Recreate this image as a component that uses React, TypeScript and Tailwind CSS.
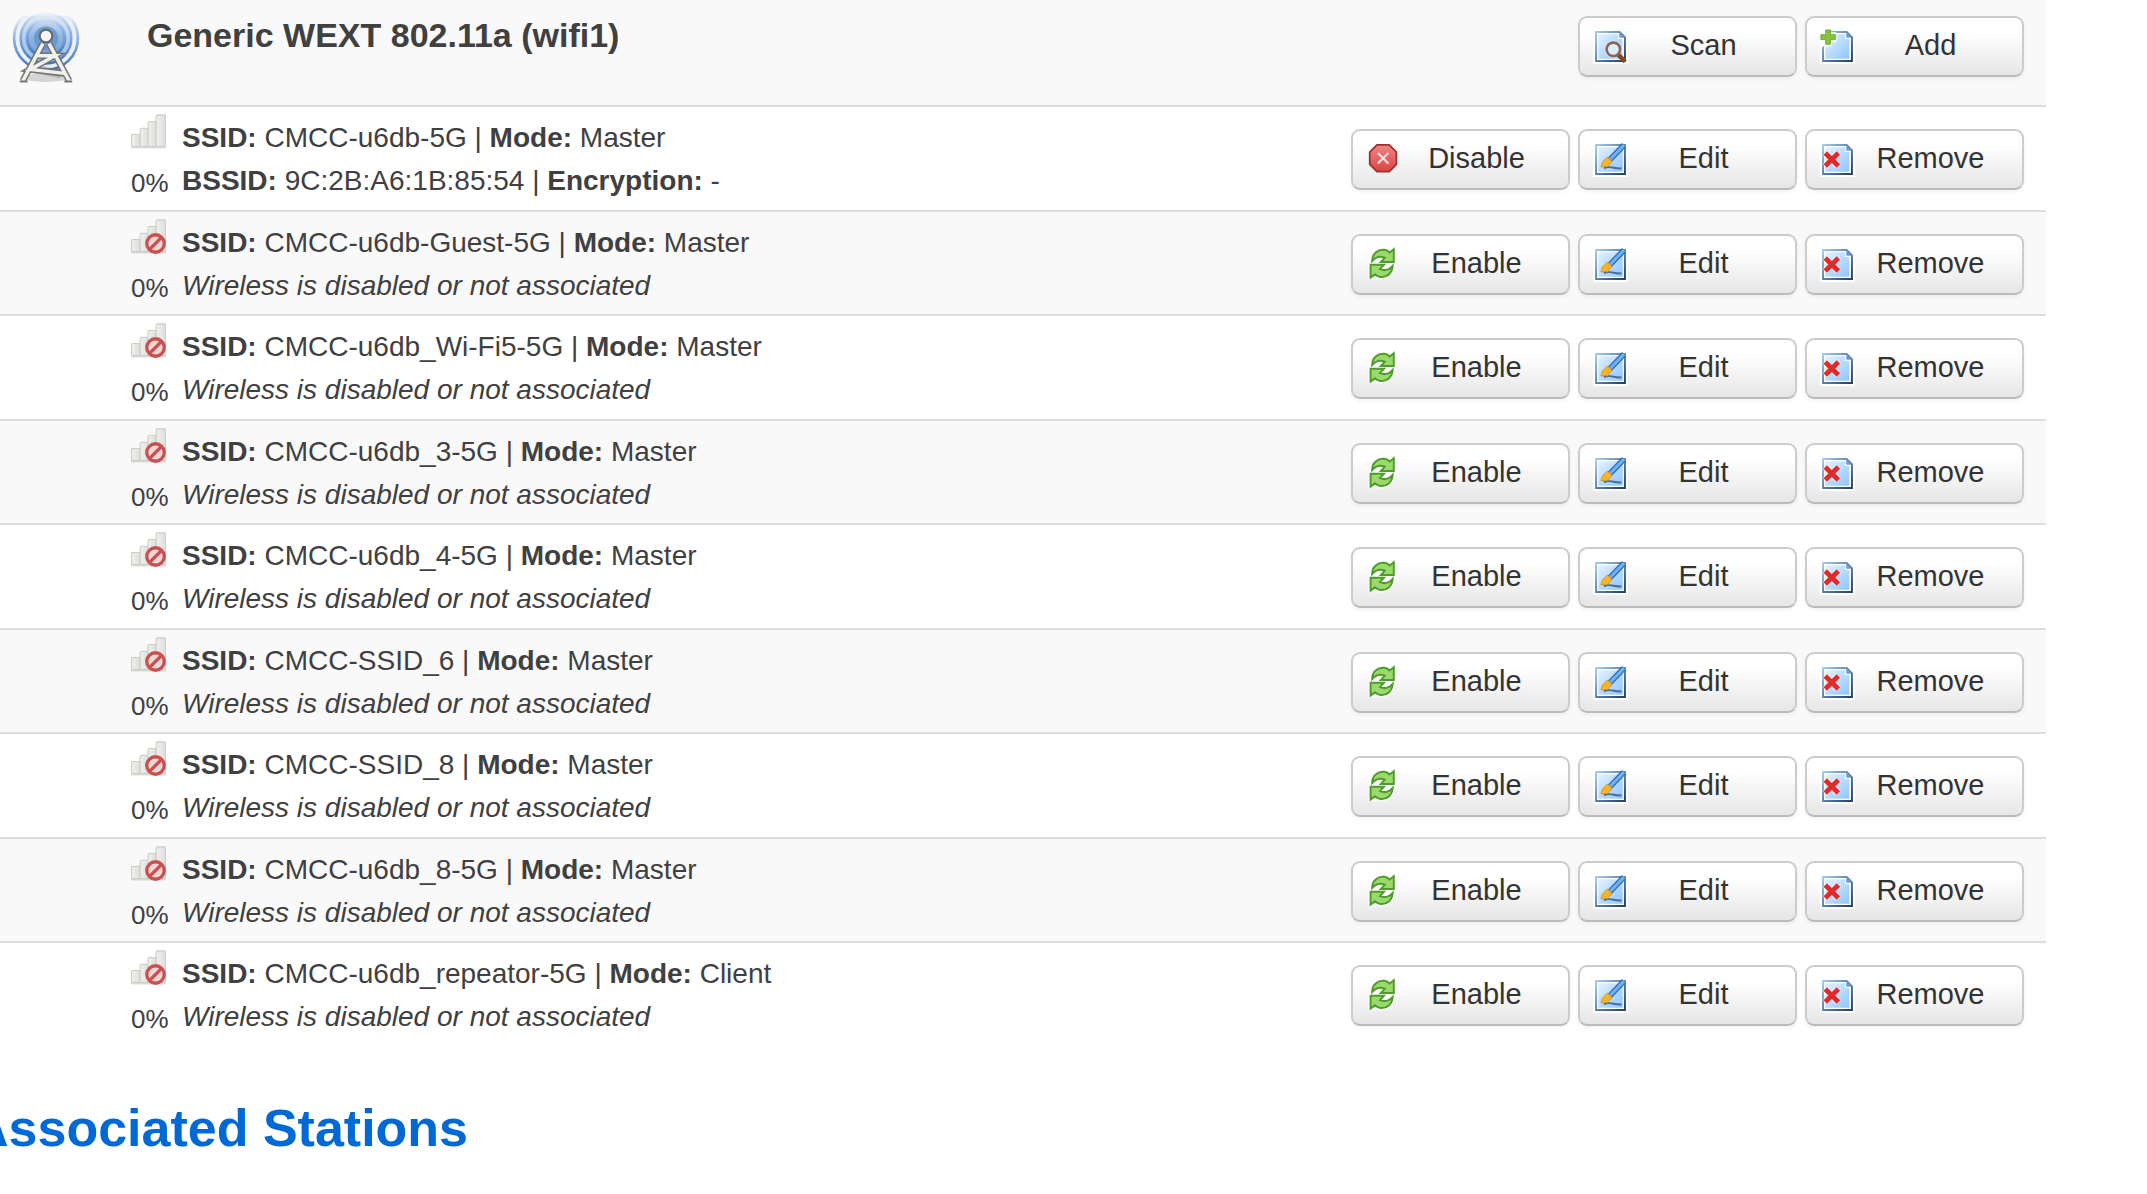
import type { ReactNode } from "react";

type Network = {
  ssid: string;
  mode: string;
  bssid?: string;
};

const networks: Network[] = [
  { ssid: "CMCC-u6db-5G", mode: "Master", bssid: "9C:2B:A6:1B:85:54" },
  { ssid: "CMCC-u6db-Guest-5G", mode: "Master" },
  { ssid: "CMCC-u6db_Wi-Fi5-5G", mode: "Master" },
  { ssid: "CMCC-u6db_3-5G", mode: "Master" },
  { ssid: "CMCC-u6db_4-5G", mode: "Master" },
  { ssid: "CMCC-SSID_6", mode: "Master" },
  { ssid: "CMCC-SSID_8", mode: "Master" },
  { ssid: "CMCC-u6db_8-5G", mode: "Master" },
  { ssid: "CMCC-u6db_repeator-5G", mode: "Client" },
];

// gradients shared by the icons below
function Defs() {
  return (
    <svg width="0" height="0" className="absolute" aria-hidden="true">
      <defs>
        <linearGradient id="page" x1="0" y1="0" x2="1" y2="1">
          <stop offset="0" stopColor="#e4f2ff" />
          <stop offset="1" stopColor="#8ec5ff" />
        </linearGradient>
        <linearGradient id="frame" x1="0" y1="0" x2="1" y2="1">
          <stop offset="0" stopColor="#a3cbe6" />
          <stop offset="0.5" stopColor="#5b82ae" />
          <stop offset="1" stopColor="#26405f" />
        </linearGradient>
        <linearGradient id="bar" x1="0" y1="0" x2="1" y2="0">
          <stop offset="0" stopColor="#f0f1ee" />
          <stop offset="1" stopColor="#dcded9" />
        </linearGradient>
        <linearGradient id="stop" x1="0" y1="0" x2="0" y2="1">
          <stop offset="0" stopColor="#ef8585" />
          <stop offset="1" stopColor="#dc4444" />
        </linearGradient>
        <linearGradient id="ring" x1="0" y1="0" x2="0" y2="1">
          <stop offset="0" stopColor="#5f92cf" stopOpacity="0" />
          <stop offset="0.45" stopColor="#6f9dd6" stopOpacity="0.8" />
          <stop offset="1" stopColor="#3d72b8" />
        </linearGradient>
        <linearGradient id="disc" x1="0" y1="0" x2="0" y2="1">
          <stop offset="0" stopColor="#a9c6e8" stopOpacity="0.2" />
          <stop offset="0.5" stopColor="#8db3e2" />
          <stop offset="1" stopColor="#6f9dd8" />
        </linearGradient>
      </defs>
    </svg>
  );
}

function TowerIcon() {
  return (
    <svg viewBox="0 0 32 32" className="size-[70px]" aria-hidden="true">
      <ellipse cx="16" cy="29.5" rx="11" ry="2" fill="#000" opacity="0.15" />
      <g transform="translate(0 -1.5)">
        <path d="M5.600 2.700h20.800a14.600 14.600 0 1 1-20.800 0z" fill="#e9f0f9" />
        <path d="M5.600 2.700a14.600 14.600 0 1 0 20.800 0" fill="none" stroke="url(#ring)" strokeWidth="1.200" />
        <circle cx="16" cy="13" r="11.600" fill="url(#disc)" opacity="0.6" />
        <circle cx="16" cy="13" r="11.600" fill="none" stroke="url(#ring)" strokeWidth="1.100" />
        <circle cx="16" cy="13" r="8.600" fill="url(#disc)" />
        <circle cx="16" cy="13" r="8.600" fill="none" stroke="url(#ring)" strokeWidth="1.400" />
        <circle cx="16" cy="13" r="5.500" fill="#6294d0" opacity="0.8" />
      </g>
      <path d="M9.500 25 23 28" stroke="#777" strokeWidth="4" opacity="0.3" />
      <g fill="none">
        <path d="M14.600 14 5.400 31M17.400 14 26.600 31M12 19.500h8L8.800 25.800l15.700 1.800" stroke="#747571" strokeWidth="3" />
        <path d="M14.600 14 5.400 31M17.400 14 26.600 31M12 19.500h8L8.800 25.800l15.700 1.800" stroke="#f1f1ee" strokeWidth="1.600" />
        <path d="M4 31.300h3.600M24.400 31.300H28" stroke="#777" strokeWidth="1" />
      </g>
      <circle cx="16" cy="10.500" r="2.900" fill="#f4f4f2" stroke="#6a6b67" strokeWidth="1" />
    </svg>
  );
}

function Page({ children }: { children: ReactNode }) {
  return (
    <svg viewBox="0 0 16 16" className="size-[35px] shrink-0" aria-hidden="true">
      <path d="M0 0h16v16H0z" fill="#fff" />
      <path d="M1.400 1.400h10.800l2.400 2.400v10.800H1.400z" fill="#fff" stroke="url(#frame)" strokeWidth="0.900" />
      <path d="M2.400 2.400h9v2.200h2v9h-11z" fill="url(#page)" />
      <path d="M12 1.400v2.600h2.600z" fill="#6f9bd0" />
      {children}
    </svg>
  );
}

function ScanIcon() {
  return (
    <Page>
      <circle cx="9.300" cy="9.300" r="4" fill="#fff" opacity="0.600" />
      <path d="m11.400 11.600 3.300 3.300" stroke="#7b4a2c" strokeWidth="2" />
      <circle cx="9.300" cy="9.300" r="3.100" fill="#dceeff" stroke="#8a6553" strokeWidth="1.200" />
    </Page>
  );
}

function AddIcon() {
  return (
    <Page>
      <path d="M0 0h5v1.500h2.500v4.500H5.500v2H0z" fill="#fff" />
      <path d="M2.600.400h2.200v2.200H7v2.200H4.800V7H2.600V4.800H.400V2.600h2.200z" fill="#85c436" stroke="#6fac2c" strokeWidth="0.400" />
    </Page>
  );
}

function RemoveIcon() {
  return (
    <Page>
      <path d="m2.200 4.800 6.200 6.400M8.400 4.800l-6.200 6.400" stroke="#fff" strokeWidth="3.200" opacity="0.400" />
      <path d="m2.400 5 6 6M8.400 5l-6 6" stroke="#e02b2b" strokeWidth="2.200" />
    </Page>
  );
}

function EditIcon() {
  return (
    <svg viewBox="0 0 16 16" className="size-[35px] shrink-0" aria-hidden="true">
      <path d="M0 0h16v16H0z" fill="#fff" />
      <path d="M1.400 1.400h13.200v13.200H1.400z" fill="#fff" stroke="url(#frame)" strokeWidth="0.900" />
      <path d="M2.400 2.400h11.200v11.200H2.400z" fill="url(#page)" />
      <path d="M5 12c3-1.500 5 .5 8 0" fill="none" stroke="#4b6d92" strokeWidth="0.900" />
      <path d="m7.500 8.300 6.700-6.900" stroke="#2f6cb3" strokeWidth="2.600" />
      <path d="m7.500 8.300 6.700-6.900" stroke="#6fb0f0" strokeWidth="1.400" />
      <path d="M3.600 11.400 4.400 9l2.200-2.200 2.200 2.200-2.200 2.200z" fill="#f5b52a" stroke="#d19418" strokeWidth="0.400" />
    </svg>
  );
}

function DisableIcon() {
  return (
    <svg viewBox="0 0 16 16" className="size-[35px] shrink-0" aria-hidden="true">
      <path d="M5 1.300h5.600l3.300 3.300v5.600l-3.300 3.300H5l-3.300-3.300V4.600z" fill="url(#stop)" stroke="#9c3030" strokeWidth="0.800" />
      <path d="m5.400 5 4.800 4.800M10.200 5 5.400 9.800" stroke="#ffe3e3" strokeWidth="0.900" />
    </svg>
  );
}

function EnableIcon() {
  return (
    <svg viewBox="0 0 16 16" className="size-[35px] shrink-0" aria-hidden="true">
      <g stroke="#fff" strokeWidth="2.400" fill="#fff" opacity="0.700">
        <path d="M2.800 6.400C2.800 3 5.300 1 8.400 1.400h4.200v5.400H6.600z" />
        <path d="M12.200 8.400c-.200 3.600-2.600 5.600-5.800 5.200H2.200V8.200h6z" />
      </g>
      <g fill="#9ad96c" stroke="#4f9c2c" strokeWidth="0.900">
        <path d="M2.800 6.400C2.800 3 5.300 1 8.400 1.300c1 .100 1.600.5 2.400 1.200l1.900-1.500v5.900H6.800l1.800-2C6.600 4 4.400 4.600 2.800 6.400z" />
        <path d="M12.200 8.600c-.200 3.400-2.600 5.400-5.600 5.100-1-.100-1.700-.5-2.500-1.200l-2 1.500V8.100H8.200l-1.800 2c2 .9 4.200.3 5.800-1.500z" />
      </g>
    </svg>
  );
}

function SignalIcon({ off }: { off: boolean }) {
  return (
    <svg viewBox="0 0 16 16" className="size-[35px]" aria-hidden="true">
      <path d="M0 15.300h16" stroke="#000" strokeWidth="1" opacity="0.120" />
      <g fill="url(#bar)" stroke="#cbcdc8" strokeWidth="0.500">
        <rect x="0.200" y="9.400" width="4" height="5.500" rx="0.600" />
        <rect x="4.200" y="6.500" width="3.800" height="8.400" rx="0.600" />
        <rect x="7.800" y="3.400" width="3.800" height="11.500" rx="0.600" />
        <rect x="11.500" y="0.400" width="4.300" height="14.500" rx="0.600" />
      </g>
      {off && (
        <g fill="none" stroke="#cc4f4f" strokeWidth="1.500">
          <circle cx="11.200" cy="11.200" r="4" fill="#ecd8d7" />
          <path d="m8.400 14 5.600-5.600" />
        </g>
      )}
    </svg>
  );
}

function ActionButton({ icon, children }: { icon: ReactNode; children: ReactNode }) {
  return (
    <button
      type="button"
      className="flex h-[61px] w-[219px] items-center rounded-[9px] border-2 border-[#ccc] border-b-[#bbb] bg-linear-to-b from-white from-25% to-[#e6e6e6] pr-4 pl-[13px] text-[29px] leading-none text-[#333] shadow-[0_2px_4px_rgba(0,0,0,0.05)]"
    >
      {icon}
      <span className="flex-1 pb-[2px] text-center">{children}</span>
    </button>
  );
}

function NetworkRow({ network }: { network: Network }) {
  return (
    <tr className="group border-t-2 border-[#ddd] even:bg-white odd:bg-[#f9f9f9]">
      <td />
      <td className="pt-[7px] pb-2 align-top group-odd:pb-[7px]">
        <div className="flex">
          <div className="flex w-[51px] flex-col gap-[18px] text-[26px] leading-8">
            <SignalIcon off={!network.bssid} />
            <span>0%</span>
          </div>
          <div className="pt-[2px] text-[28px] leading-[43px]">
            <p>
              <strong>SSID:</strong> {network.ssid} | <strong>Mode:</strong> {network.mode}
            </p>
            {network.bssid ? (
              <p>
                <strong>BSSID:</strong> {network.bssid} | <strong>Encryption:</strong> -
              </p>
            ) : (
              <p>
                <em>Wireless is disabled or not associated</em>
              </p>
            )}
          </div>
        </div>
      </td>
      <td className="pt-[22px] pr-[22px] align-top">
        <div className="flex justify-end gap-2">
          {network.bssid ? (
            <ActionButton icon={<DisableIcon />}>Disable</ActionButton>
          ) : (
            <ActionButton icon={<EnableIcon />}>Enable</ActionButton>
          )}
          <ActionButton icon={<EditIcon />}>Edit</ActionButton>
          <ActionButton icon={<RemoveIcon />}>Remove</ActionButton>
        </div>
      </td>
    </tr>
  );
}

export default function App() {
  return (
    <main className="overflow-hidden bg-white pr-[101px] font-['Liberation_Sans',Arial,sans-serif] text-[#404040]">
      <Defs />
      <table className="w-full border-collapse">
        <tbody>
          <tr className="bg-[#f9f9f9]">
            <td className="w-[131px] pt-[13px] pb-[22px] pl-[11px] align-top">
              <TowerIcon />
            </td>
            <th className="pt-[15px] pl-4 text-left align-top text-[34px] leading-10 font-bold">
              Generic WEXT 802.11a (wifi1)
            </th>
            <td className="pt-4 pr-[22px] align-top">
              <div className="flex justify-end gap-2">
                <ActionButton icon={<ScanIcon />}>Scan</ActionButton>
                <ActionButton icon={<AddIcon />}>Add</ActionButton>
              </div>
            </td>
          </tr>
          {networks.map((network) => (
            <NetworkRow key={network.ssid} network={network} />
          ))}
        </tbody>
      </table>
      <h2 className="mt-[52px] -ml-[29px] text-[52px] leading-[60px] font-bold text-[#0069d6]">
        Associated Stations
      </h2>
    </main>
  );
}
